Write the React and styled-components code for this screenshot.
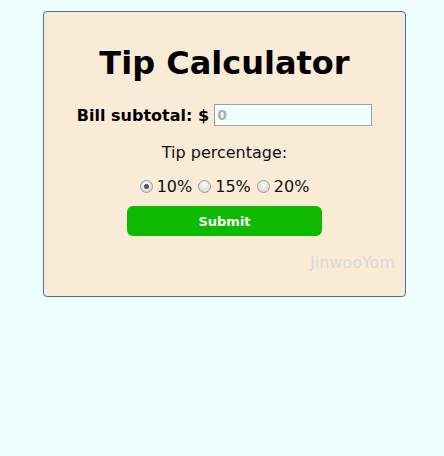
import React, { useState } from "react";
import styled, { createGlobalStyle } from "styled-components";

const GlobalStyle = createGlobalStyle`
  body {
    margin: 8px;
    background-color: #f0ffff;
    font-family: "DejaVu Sans", Verdana, sans-serif;
  }
`;

const Card = styled.div`
  width: 361px;
  margin: 3px 0 0 35px;
  background-color: #faebd7;
  border: 1px solid #3a74c0;
  border-radius: 4px;
  display: flex;
  flex-direction: column;
  align-items: center;
  padding: 33px 0 24px;
  box-sizing: content-box;
`;

const Title = styled.h1`
  margin: 0;
  font-size: 32px;
  line-height: 37px;
  font-weight: bold;
  color: #000;
`;

const BillRow = styled.div`
  margin-top: 22px;
  display: flex;
  align-items: center;
  height: 22px;
  gap: 5px;
  font-size: 16px;
  font-weight: bold;
`;

const BillInput = styled.input`
  width: 158px;
  height: 22px;
  box-sizing: border-box;
  border: 1px solid #a0a0a0;
  background-color: #f0ffff;
  padding: 0 2px;
  font-family: inherit;
  font-size: 14px;
  font-weight: bold;
  outline: none;
  &::placeholder {
    color: #b0b0b0;
  }
`;

const Label = styled.div`
  margin-top: 17px;
  font-size: 16px;
  line-height: 19px;
  color: #111;
`;

const RadioRow = styled.div`
  margin-top: 15px;
  display: flex;
  align-items: center;
  font-size: 16px;
  line-height: 19px;
  color: #111;
`;

const RadioLabel = styled.label`
  display: flex;
  align-items: center;
  margin-left: ${(p) => (p.first ? "0" : "6px")};
`;

const Radio = styled.input`
  appearance: none;
  width: 13px;
  height: 13px;
  margin: 0 4px 0 0;
  border-radius: 50%;
  border: 1px solid #9a9a9a;
  background: radial-gradient(circle at 50% 35%, #fbfbfb 0%, #dcdcdc 70%, #cfcfcf 100%);
  box-sizing: border-box;
  position: relative;
  &:checked::after {
    content: "";
    position: absolute;
    left: 3px;
    top: 3px;
    width: 5px;
    height: 5px;
    border-radius: 50%;
    background: #555;
  }
`;

const SubmitButton = styled.button`
  margin-top: 10px;
  width: 195px;
  height: 30px;
  border: none;
  border-radius: 6px;
  background-color: #0dba00;
  color: #fff;
  font-family: inherit;
  font-size: 13px;
  font-weight: bold;
  cursor: pointer;
`;

const Signature = styled.div`
  margin-top: 17px;
  align-self: flex-end;
  margin-right: 10px;
  font-size: 16px;
  line-height: 19px;
  color: #d8d8d8;
`;

const App = () => {
  const [tip, setTip] = useState("10");
  const options = ["10", "15", "20"];
  return (
    <>
      <GlobalStyle />
      <Card>
        <Title>Tip Calculator</Title>
        <BillRow>
          Bill subtotal: $
          <BillInput type="text" placeholder="0" />
        </BillRow>
        <Label>Tip percentage:</Label>
        <RadioRow>
          {options.map((o, i) => (
            <RadioLabel key={o} first={i === 0}>
              <Radio
                type="radio"
                name="tip"
                value={o}
                checked={tip === o}
                onChange={() => setTip(o)}
              />
              {o}%
            </RadioLabel>
          ))}
        </RadioRow>
        <SubmitButton>Submit</SubmitButton>
        <Signature>JinwooYom</Signature>
      </Card>
    </>
  );
};

export default App;
